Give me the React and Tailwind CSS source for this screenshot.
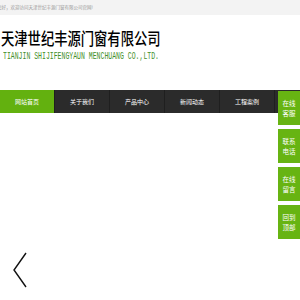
export default function App() {
  const navItems = ['网站首页', '关于我们', '产品中心', '新闻动态', '工程案例'];
  const sideItems = [
    ['在线', '客服'],
    ['联系', '电话'],
    ['在线', '留言'],
    ['回到', '顶部'],
  ];

  return (
    <div
      className="relative w-[300px] h-[300px] overflow-hidden bg-white"
      style={{ fontFamily: '"Noto Sans CJK SC", "Liberation Sans", sans-serif' }}
    >
      {/* welcome bar */}
      <div className="h-[15px] bg-[#f3f3f3] flex items-center">
        <span className="-ml-[3px] text-[4.5px] text-[#9a9a9a] whitespace-nowrap">
          您好，欢迎访问天津世纪丰源门窗有限公司官网!
        </span>
      </div>

      {/* company name */}
      <div className="h-[75px] pt-[14px]">
        <div className="h-[20px] leading-[20px] pl-[1px] text-[13.3px] font-medium text-black whitespace-nowrap scale-y-[1.25] origin-center">
          天津世纪丰源门窗有限公司
        </div>
        <div
          className="mt-[3px] h-[10px] leading-[10px] pl-[3px] text-[6.5px] text-[#3f8f2a] whitespace-nowrap scale-y-[1.6] origin-center"
          style={{ fontFamily: '"Liberation Mono", monospace' }}
        >
          TIANJIN SHIJIFENGYAUN MENCHUANG CO.,LTD.
        </div>
      </div>

      {/* nav */}
      <div className="flex h-[23px] bg-[#2b2b2b]">
        {navItems.map((item, i) => (
          <div
            key={item}
            className={
              'w-[55px] flex items-center justify-center text-[6px] text-white border-r border-[#1f1f1f] ' +
              (i === 0 ? 'bg-[#63b10f]' : '')
            }
          >
            {item}
          </div>
        ))}
      </div>

      {/* floating side panel */}
      <div className="absolute right-0 top-[91px] w-[22px] flex flex-col gap-[4px]">
        {sideItems.map(([a, b]) => (
          <div
            key={a + b}
            className="h-[34px] bg-[#67b412] text-white text-[6.5px] leading-[10px] flex flex-col items-center justify-center"
          >
            <span>{a}</span>
            <span>{b}</span>
          </div>
        ))}
      </div>

      {/* slider arrow */}
      <svg className="absolute left-0 top-[240px]" width="40" height="60" viewBox="0 0 40 60">
        <polyline points="26,13 14,30 26,47" fill="none" stroke="#111" strokeWidth="1.4" />
      </svg>
    </div>
  );
}
